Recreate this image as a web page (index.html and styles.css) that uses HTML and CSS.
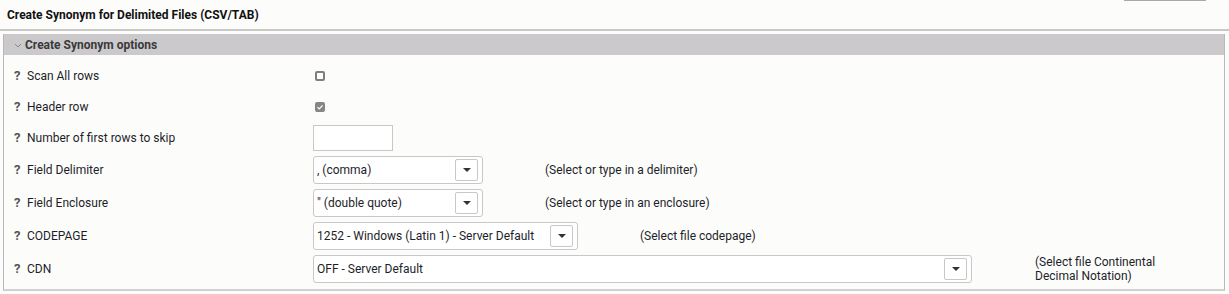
FILE: index.html
```html
<!DOCTYPE html>
<html lang="en">
<head>
    <meta charset="UTF-8">
    <title>Create Synonym for Delimited Files</title>
    <link rel="stylesheet" href="styles.css">
</head>
<body>
    <div class="title-bar">
        <div class="title">Create Synonym for Delimited Files (CSV/TAB)</div>
        <div class="toolbar-btn"></div>
    </div>

    <div class="panel">
        <div class="panel-header">
            <svg class="chevron" viewBox="0 0 8 5" width="8" height="5">
                <path d="M1 1l3 3 3-3" fill="none" stroke="#888" stroke-width="1"/>
            </svg>
            Create Synonym options
        </div>
        <div class="panel-body">
            <div class="row">
                <div class="label"><span class="help">?</span>Scan All rows</div>
                <div class="control"><span class="checkbox"></span></div>
            </div>
            <div class="row">
                <div class="label"><span class="help">?</span>Header row</div>
                <div class="control">
                    <span class="checkbox checked">
                        <svg viewBox="0 0 10 10" width="10" height="10"><path d="M2.5 5.2l1.8 1.8 3.3-3.6" fill="none" stroke="#fff" stroke-width="1.2"/></svg>
                    </span>
                </div>
            </div>
            <div class="row">
                <div class="label"><span class="help">?</span>Number of first rows to skip</div>
                <div class="control"><div class="text-input"></div></div>
            </div>
            <div class="row tall">
                <div class="label"><span class="help">?</span>Field Delimiter</div>
                <div class="control">
                    <div class="combo w-small">
                        <span class="value">, (comma)</span>
                        <span class="drop"><span class="caret"></span></span>
                    </div>
                    <span class="hint">(Select or type in a delimiter)</span>
                </div>
            </div>
            <div class="row tall">
                <div class="label"><span class="help">?</span>Field Enclosure</div>
                <div class="control">
                    <div class="combo w-small">
                        <span class="value">" (double quote)</span>
                        <span class="drop"><span class="caret"></span></span>
                    </div>
                    <span class="hint">(Select or type in an enclosure)</span>
                </div>
            </div>
            <div class="row tall">
                <div class="label"><span class="help">?</span>CODEPAGE</div>
                <div class="control">
                    <div class="combo w-medium">
                        <span class="value">1252 - Windows (Latin 1) - Server Default</span>
                        <span class="drop"><span class="caret"></span></span>
                    </div>
                    <span class="hint">(Select file codepage)</span>
                </div>
            </div>
            <div class="row tall">
                <div class="label"><span class="help">?</span>CDN</div>
                <div class="control">
                    <div class="combo w-large">
                        <span class="value">OFF - Server Default</span>
                        <span class="drop"><span class="caret"></span></span>
                    </div>
                    <span class="hint narrow">(Select file Continental Decimal Notation)</span>
                </div>
            </div>
        </div>
    </div>
</body>
</html>
```

FILE: styles.css
```css
* {
    margin: 0;
    padding: 0;
    box-sizing: border-box;
}

body {
    background: #fcfdfb;
    font-family: Roboto, "Liberation Sans", sans-serif;
    font-size: 12px;
    color: #1e1e2a;
}

.title-bar {
    height: 31px;
    display: flex;
    justify-content: space-between;
    border-bottom: 2px solid #c9cac6;
}

.title {
    font-weight: bold;
    padding: 8px 0 0 7px;
    color: #111;
}

.toolbar-btn {
    width: 82px;
    height: 1px;
    background: #a8a8a8;
    margin-right: 23px;
}

.panel {
    margin: 3px 4px 0 3px;
    border-left: 1px solid #b8b8b8;
    border-right: 1px solid #b8b8b8;
    border-bottom: 2px solid #d0d0d0;
}

.panel-header {
    height: 21px;
    background: #cbc9cb;
    display: flex;
    align-items: center;
    gap: 3px;
    padding-left: 10px;
    font-weight: bold;
    color: #3a3a3a;
}

.chevron {
    margin-top: 1px;
}

.panel-body {
    padding: 5px 0 4px;
}

.row {
    display: flex;
    align-items: center;
    height: 31px;
}

.row.tall {
    height: 33px;
}

.label {
    width: 309px;
    padding-left: 10px;
    display: flex;
    align-items: center;
}

.help {
    font-weight: bold;
    font-size: 13px;
    color: #555;
    width: 13px;
}

.control {
    display: flex;
    align-items: center;
}

.checkbox {
    width: 10px;
    height: 10px;
    margin-left: 2px;
    border: 2px solid #7e7e80;
    border-radius: 2px;
    display: flex;
    align-items: center;
    justify-content: center;
}

.checkbox.checked {
    background: #858585;
    border-color: #858585;
}

.checkbox svg {
    flex: none;
}

.text-input {
    width: 80px;
    height: 26px;
    border: 1px solid #c8c8c8;
    background: #fff;
}

.combo {
    height: 28px;
    border: 1px solid #c8c8c8;
    border-radius: 3px;
    background: #fff;
    display: flex;
    align-items: center;
    justify-content: space-between;
    padding: 0 4px 0 3px;
}

.w-small { width: 170px; }
.w-medium { width: 265px; }
.w-large { width: 659px; }

.value {
    white-space: nowrap;
}

.drop {
    width: 23px;
    height: 22px;
    border: 1px solid #c8c8c8;
    border-radius: 2px;
    background: #fff;
    display: flex;
    align-items: center;
    justify-content: center;
}

.caret {
    width: 0;
    height: 0;
    border-left: 4px solid transparent;
    border-right: 4px solid transparent;
    border-top: 4px solid #333;
}

.hint {
    margin-left: 62px;
}

.hint.narrow {
    width: 135px;
    margin-left: 63px;
    line-height: 14px;
}
```
